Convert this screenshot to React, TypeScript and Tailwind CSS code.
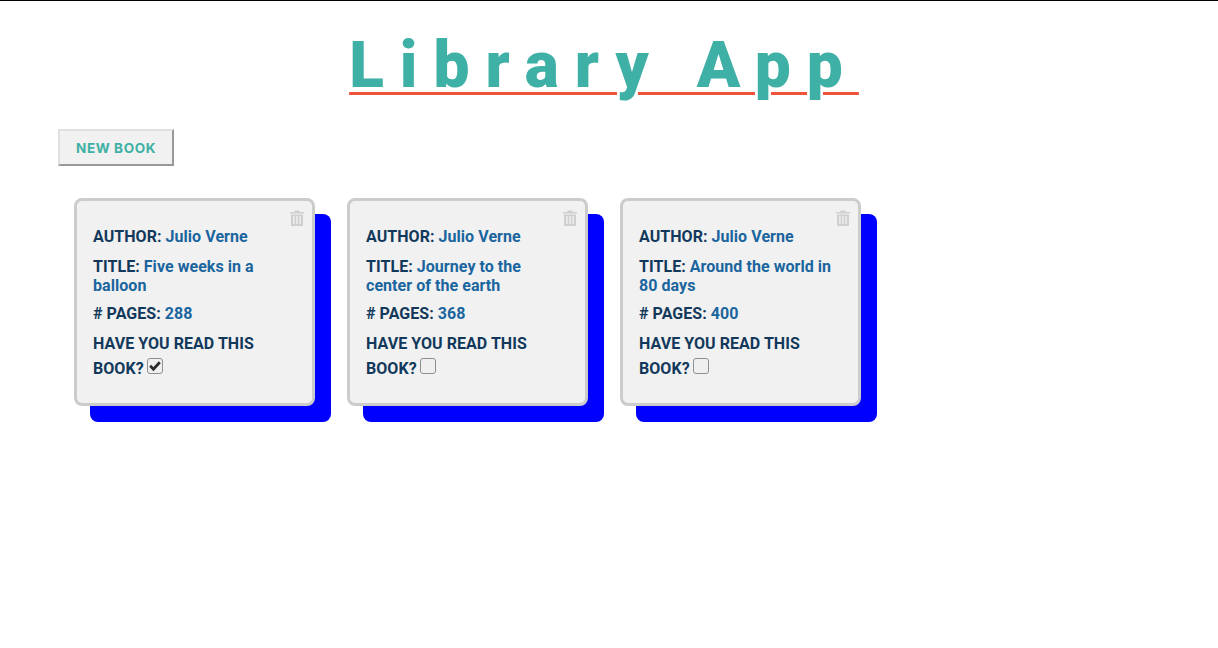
const books = [
  { title: "Five weeks in a balloon", pages: 288, read: true },
  { title: "Journey to the center of the earth", pages: 368, read: false },
  { title: "Around the world in 80 days", pages: 400, read: false },
];

function Trash() {
  return (
    <svg className="absolute top-[9px] right-[8px] w-[14px] h-[16px]" viewBox="0 0 14 16" fill="#cfcfcf">
      <path d="M0 2h4.5V0.6h5V2H14v1.6H0zM1 4.4h12V15a1 1 0 0 1-1 1H2a1 1 0 0 1-1-1zM3.2 6v8h1.4V6zM6.3 6v8h1.4V6zM9.4 6v8h1.4V6z" fillRule="evenodd" />
    </svg>
  );
}

function BookCard({ title, pages, read }: { title: string; pages: number; read: boolean }) {
  return (
    <div className="relative w-[241px] h-[208px] bg-[#f1f1f1] border-[3px] border-[#cccccc] rounded-lg shadow-[16px_16px_0_0_#0000ff] pt-[26px] pl-[16px] pr-[16px] text-[16px] font-bold tracking-[0.05px] text-[#12395b]">
      <Trash />
      <p className="leading-[19px] mb-[11px]">
        AUTHOR: <span className="text-[#1a659e]">Julio Verne</span>
      </p>
      <p className="leading-[19px] mb-[9px]">
        TITLE: <span className="text-[#1a659e]">{title}</span>
      </p>
      <p className="leading-[19px] mb-[8px]">
        # PAGES: <span className="text-[#1a659e]">{pages}</span>
      </p>
      <div className="leading-[25px]">
        HAVE YOU READ THIS BOOK?{" "}
        <input
          type="checkbox"
          defaultChecked={read}
          className="w-4 h-4 ml-[-0.4px] align-[0px] appearance-none bg-[#efefef] border border-[#8f8f8f] rounded-[3px] checked:bg-[url('data:image/svg+xml,%3Csvg%20xmlns=%22http://www.w3.org/2000/svg%22%20viewBox=%220%200%2014%2014%22%3E%3Cpath%20d=%22M2.2%206.8l3.2%203.3L11.8%203.2%22%20fill=%22none%22%20stroke=%22%232b2b2b%22%20stroke-width=%222.8%22/%3E%3C/svg%3E')]"
        />
      </div>
    </div>
  );
}

export default function App() {
  return (
    <div className="min-h-[648px] bg-white border-t border-black font-['Roboto',sans-serif]">
      <h1 className="text-center text-[64px] font-black leading-[75px] mt-[27px] pr-[10px] text-[#3eb0a5] tracking-[16px] underline decoration-[#f0533a] decoration-[3px] underline-offset-[5px]">
        Library App
      </h1>
      <div className="pl-[58px] mt-[26px]">
        <button className="w-[116px] h-[37px] pt-[1px] bg-[#f1f1f1] border-2 border-t-[#e0e0e0] border-l-[#e0e0e0] border-r-[#999999] border-b-[#999999] text-[13.5px] font-bold text-[#3eb0a5] font-['Inter',sans-serif] tracking-[0.6px]">
          NEW BOOK
        </button>
      </div>
      <div className="flex gap-[32px] pl-[74px] mt-[32px]">
        {books.map((b) => (
          <BookCard key={b.title} {...b} />
        ))}
      </div>
    </div>
  );
}
